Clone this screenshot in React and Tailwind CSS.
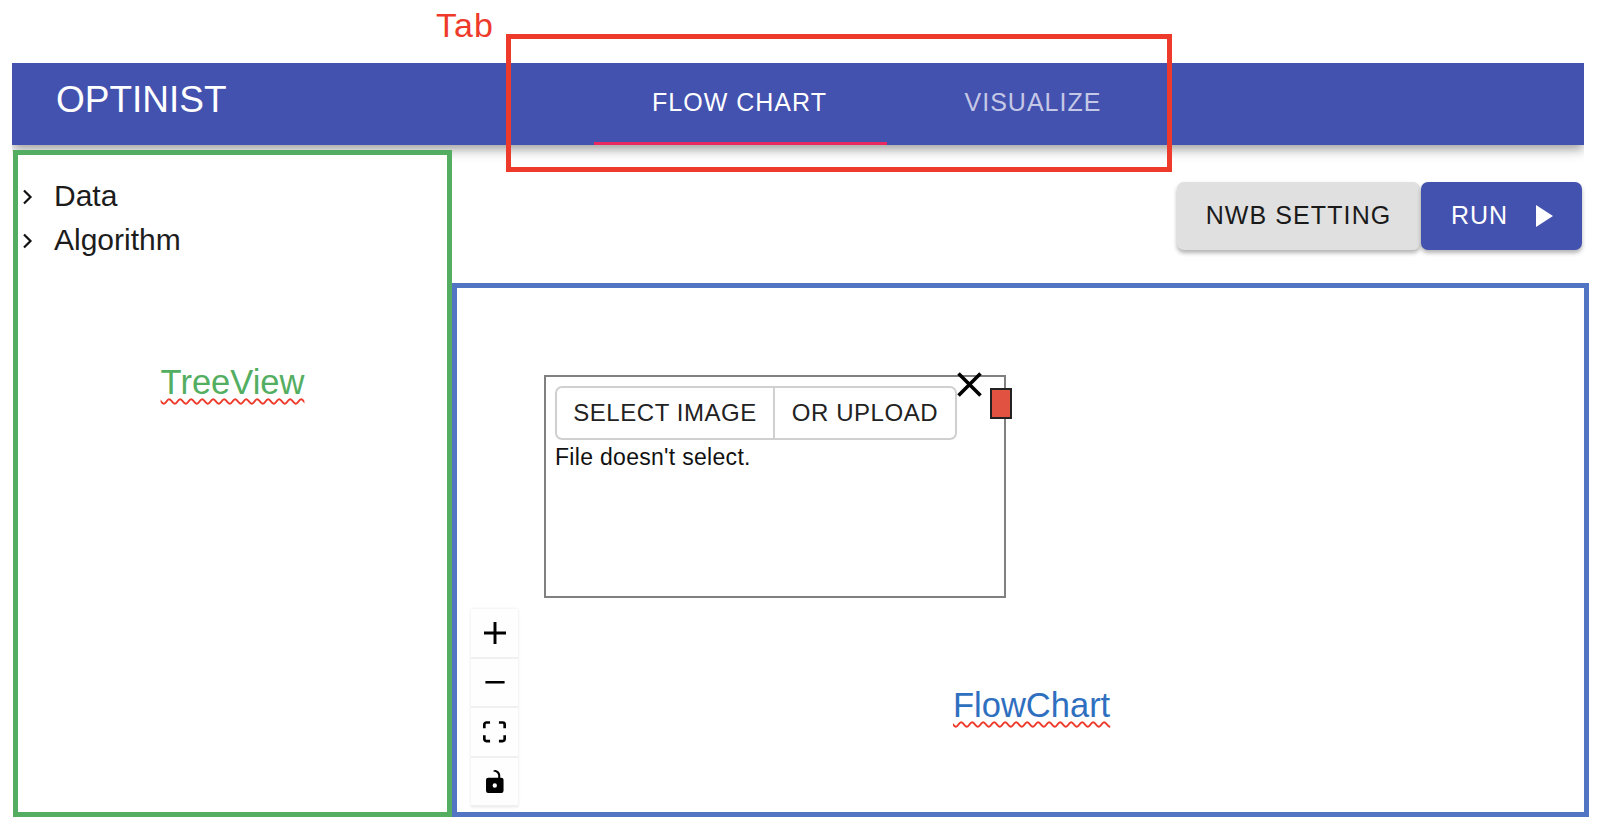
import React from "react";

const ChevronIcon = () => (
  <svg width="12" height="16" viewBox="0 0 12 16" className="mt-[3px] shrink-0">
    <path d="M2 1.5 8.5 8 2 14.5" fill="none" stroke="#111" strokeWidth="2.2" />
  </svg>
);

const TreeRow = ({ label }) => (
  <div className="flex h-[44px] items-center pl-[4px] pt-[1px]">
    <ChevronIcon />
    <span className="ml-[20px] text-[30px] text-[#1c1c1c]">{label}</span>
  </div>
);

const ControlButton = ({ viewBox, width, height, d }) => (
  <div className="flex h-[49.5px] items-center justify-center border-b-2 border-[#f0f0f0] bg-[#fefefe]">
    <svg width={width} height={height} viewBox={viewBox} fill="#000">
      <path d={d} />
    </svg>
  </div>
);

const App = () => {
  return (
    <div className="relative h-[830px] w-[1608px] overflow-hidden bg-white pl-[12px] pt-[63px] font-['Liberation_Sans',Arial,sans-serif]">
      {/* annotation: tab area */}
      <div className="absolute left-[506px] top-[34px] z-30 h-[138px] w-[666px] border-[5px] border-[#ee3a2a]" />
      <span className="absolute left-[436px] top-[6px] z-30 text-[34px] leading-[38px] tracking-[1px] text-[#ee3a2a]">
        Tab
      </span>

      <header className="relative z-10 flex h-[82px] w-[1572px] bg-[#4351af] text-white shadow-[0_4px_8px_-2px_rgba(0,0,0,0.2),0_7px_9px_0_rgba(0,0,0,0.14),0_2px_18px_0_rgba(0,0,0,0.12)] [clip-path:inset(0_0_-30px_0)]">
        <div className="flex w-[582px] items-center pb-[9px] pl-[44px] text-[37px]">
          OPTINIST
        </div>
        <div className="flex">
          <div className="flex w-[293px] items-center justify-center border-b-[3px] border-[#e8285f] pr-[2px] text-[25px] tracking-[1px]">
            FLOW CHART
          </div>
          <div className="flex w-[294px] items-center justify-center border-b-[3px] border-transparent pr-[2px] text-[25px] tracking-[1px] text-white/70">
            VISUALIZE
          </div>
        </div>
      </header>

      <div className="flex">
        <aside className="relative z-20 ml-[1px] mt-[5px] h-[667px] w-[439px] border-[5px] border-[#53ae62] bg-white pt-[18px]">
          <TreeRow label="Data" />
          <TreeRow label="Algorithm" />
          <div className="mt-[101px] text-center text-[34.5px] leading-[40px] text-[#53ae62] underline decoration-[#ee3a2a] decoration-wavy decoration-[1.5px] underline-offset-[4px]">
            TreeView
          </div>
        </aside>

        <main className="w-[1137px]">
          <div className="flex justify-end pr-[7px] pt-[37px]">
            <button className="h-[68px] w-[243px] rounded-[7px] bg-[#e0e0e0] text-[25px] tracking-[1.1px] text-[#1a1a1a] shadow-[0_3px_4px_rgba(0,0,0,0.3)]">
              NWB SETTING
            </button>
            <button className="ml-[1px] flex h-[68px] w-[161px] items-center rounded-[7px] bg-[#4351af] pl-[30px] text-[25px] tracking-[1px] text-white shadow-[0_3px_4px_rgba(0,0,0,0.3)]">
              RUN
              <svg width="17" height="22" viewBox="0 0 17 22" className="ml-[28px]">
                <path d="M0 0 17 11 0 22z" fill="#fff" />
              </svg>
            </button>
          </div>

          <section className="relative mt-[33px] h-[534px] border-[5px] border-[#5175c3]">
            {/* node on the flow canvas */}
            <div className="absolute left-[87px] top-[87px] h-[223px] w-[462px] border-2 border-[#808080] pl-[9px] pt-[9px]">
              <div className="flex h-[54px] w-[402px] rounded-[7px] border-2 border-[#d0d0d0] text-[24px] tracking-[0.55px] text-[#222]">
                <div className="flex w-[218px] items-center justify-center border-r-2 border-[#d0d0d0]">
                  SELECT IMAGE
                </div>
                <div className="flex flex-1 items-center justify-center">OR UPLOAD</div>
              </div>
              <p className="mt-[4px] text-[23px] leading-[26px] tracking-[0.3px] text-[#111]">
                File doesn't select.
              </p>
              <svg width="25" height="25" viewBox="0 0 25 25" className="absolute left-[411px] top-[-5px]">
                <path d="M1.5 1.5 23.5 23.5M23.5 1.5 1.5 23.5" stroke="#000" strokeWidth="3.6" fill="none" />
              </svg>
              <div className="absolute left-[444px] top-[11px] h-[31px] w-[22px] border-2 border-[#222] bg-[#e25241]" />
            </div>

            {/* canvas controls */}
            <div className="absolute left-[14px] top-[321px] flex w-[47px] flex-col shadow-[0_0_3px_rgba(0,0,0,0.1)]">
              <ControlButton
                viewBox="0 0 32 32"
                width={22}
                height={22}
                d="M32 18.133H18.133V32h-4.266V18.133H0v-4.266h13.867V0h4.266v13.867H32z"
              />
              <ControlButton viewBox="0 0 32 5" width={22} height={3} d="M0 0h32v4.2H0z" />
              <ControlButton
                viewBox="0 0 32 30"
                width={23}
                height={22}
                d="M3.692 4.63c0-.53.4-.938.939-.938h5.215V0H4.708C2.13 0 0 2.054 0 4.63v5.216h3.692V4.631zM27.354 0h-5.2v3.692h5.17c.53 0 .984.4.984.939v5.215H32V4.631A4.624 4.624 0 0027.354 0zm.954 24.83c0 .532-.4.94-.939.94h-5.215v3.768h5.215c2.577 0 4.631-2.13 4.631-4.707v-5.139h-3.692v5.139zm-23.677.94c-.531 0-.939-.4-.939-.94v-5.138H0v5.139c0 2.577 2.13 4.707 4.708 4.707h5.138V25.77H4.631z"
              />
              <ControlButton
                viewBox="0 0 25 32"
                width={18}
                height={23}
                d="M21.333 10.667H19.81V7.619C19.81 3.429 16.38 0 12.19 0c-4.114 1.828-1.37 2.133.305 2.438 1.676.305 4.42 2.59 4.42 5.181v3.048H3.047A3.056 3.056 0 000 13.714v15.238A3.056 3.056 0 003.048 32h18.285a3.056 3.056 0 003.048-3.048V13.714a3.056 3.056 0 00-3.048-3.047zM12.19 24.533a3.056 3.056 0 01-3.047-3.047 3.056 3.056 0 013.047-3.048 3.056 3.056 0 013.048 3.048 3.056 3.056 0 01-3.048 3.047z"
              />
            </div>

            {/* annotation: flow chart */}
            <span className="absolute left-[496px] top-[397px] text-[34.5px] leading-[40px] text-[#2f6fc0] underline decoration-[#ee3a2a] decoration-wavy decoration-[1.5px] underline-offset-[4px]">
              FlowChart
            </span>
          </section>
        </main>
      </div>
    </div>
  );
};

export default App;
